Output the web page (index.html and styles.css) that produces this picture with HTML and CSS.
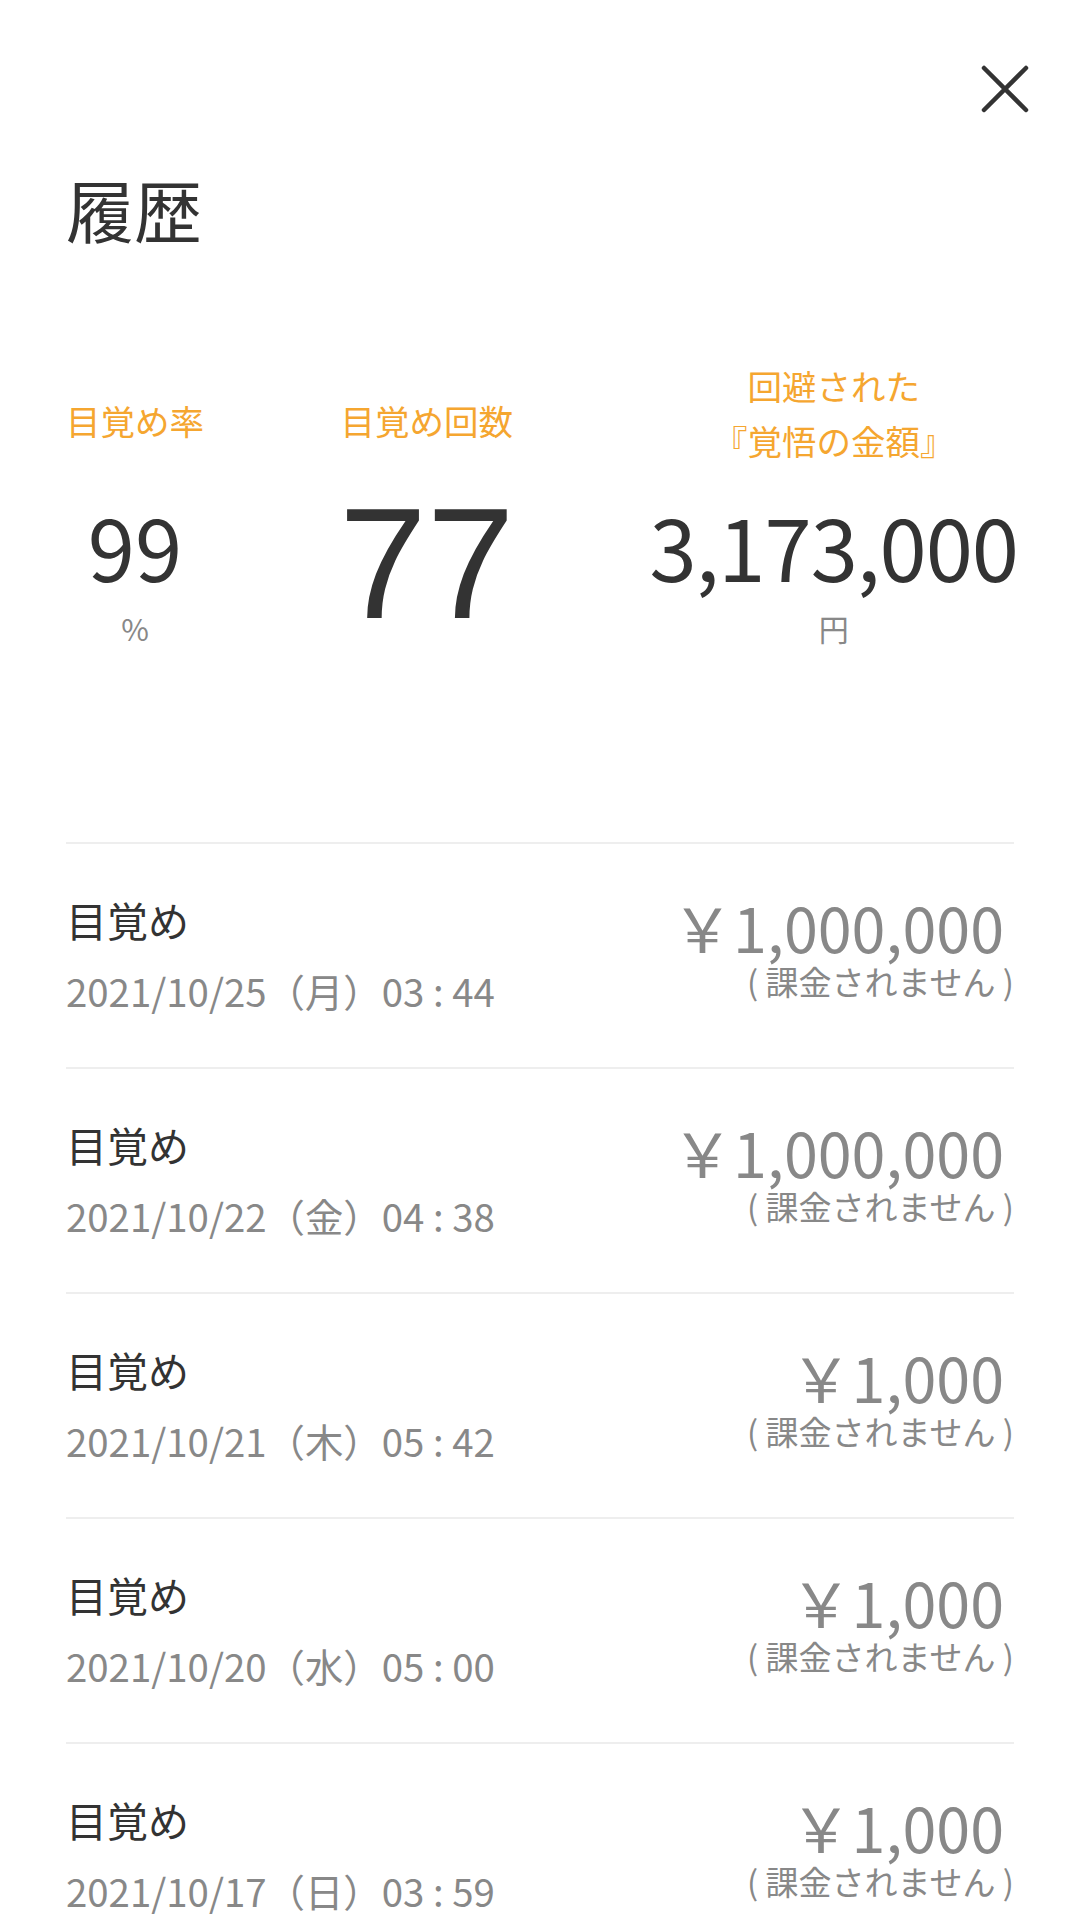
FILE: index.html
```html
<!DOCTYPE html>
<html lang="ja">
<head>
<meta charset="utf-8">
<title>履歴</title>
<link rel="stylesheet" href="styles.css">
</head>
<body>
<div class="page">
  <div class="topbar">
    <button class="close" aria-label="閉じる">
      <svg width="48" height="48" viewBox="0 0 48 48"><path d="M3 3 L45 45 M45 3 L3 45" stroke="#333" stroke-width="4.5" stroke-linecap="round" fill="none"/></svg>
    </button>
  </div>
  <div class="content">
    <h1 class="title">履歴</h1>
    <div class="stats">
      <div class="stat">
        <div class="stat-label single">目覚め率</div>
        <div class="stat-value">99</div>
        <div class="stat-unit">%</div>
      </div>
      <div class="stat">
        <div class="stat-label single">目覚め回数</div>
        <div class="stat-value big">77</div>
      </div>
      <div class="stat">
        <div class="stat-label">回避された<br>『覚悟の金額』</div>
        <div class="stat-value tight">3,173,000</div>
        <div class="stat-unit">円</div>
      </div>
    </div>
    <ul class="list">
      <li class="row">
        <div class="row-left"><div class="row-title">目覚め</div><div class="row-date">2021/10/25（月）03 : 44</div></div>
        <div class="row-right"><div class="amount">￥1,000,000</div><div class="note">( 課金されません )</div></div>
      </li>
      <li class="row">
        <div class="row-left"><div class="row-title">目覚め</div><div class="row-date">2021/10/22（金）04 : 38</div></div>
        <div class="row-right"><div class="amount">￥1,000,000</div><div class="note">( 課金されません )</div></div>
      </li>
      <li class="row">
        <div class="row-left"><div class="row-title">目覚め</div><div class="row-date">2021/10/21（木）05 : 42</div></div>
        <div class="row-right"><div class="amount">￥1,000</div><div class="note">( 課金されません )</div></div>
      </li>
      <li class="row">
        <div class="row-left"><div class="row-title">目覚め</div><div class="row-date">2021/10/20（水）05 : 00</div></div>
        <div class="row-right"><div class="amount">￥1,000</div><div class="note">( 課金されません )</div></div>
      </li>
      <li class="row">
        <div class="row-left"><div class="row-title">目覚め</div><div class="row-date">2021/10/17（日）03 : 59</div></div>
        <div class="row-right"><div class="amount">￥1,000</div><div class="note">( 課金されません )</div></div>
      </li>
    </ul>
  </div>
</div>
</body>
</html>
```
FILE: styles.css
```css
* { box-sizing: border-box; }
html, body {
  margin: 0;
  padding: 0;
  background: #ffffff;
}
body {
  font-family: "Noto Sans CJK JP", "Noto Sans", sans-serif;
  color: #333333;
}
.page {
  width: 1080px;
  height: 1932px;
  overflow: hidden;
}
.topbar {
  display: flex;
  justify-content: flex-end;
  padding: 65px 51px 0 0;
}
.close {
  width: 48px;
  height: 48px;
  padding: 0;
  border: 0;
  background: none;
  display: block;
}
.close svg { display: block; }
.content {
  padding: 0 66px;
}
.title {
  margin: 57px 0 0;
  font-size: 68px;
  line-height: 78px;
  font-weight: 400;
  color: #333333;
}
.stats {
  display: flex;
  justify-content: space-between;
  align-items: flex-start;
  margin: 110px -4px 0 0;
}
.stat {
  display: flex;
  flex-direction: column;
  align-items: center;
  text-align: center;
}
.stat-label {
  height: 110px;
  display: flex;
  align-items: center;
  justify-content: center;
  font-size: 34.5px;
  line-height: 55px;
  color: #f5a630;
  white-space: nowrap;
}
.stat-label.single {
  padding-top: 14px;
}
.stat-value {
  margin-top: 17px;
  font-size: 85px;
  line-height: 120px;
  color: #333333;
  white-space: nowrap;
}
.stat-value.tight {
  letter-spacing: -1px;
}
.stat-value.big {
  font-family: "Liberation Sans", Arial, sans-serif;
  font-size: 158px;
  line-height: 157px;
}
.stat-unit {
  margin-top: 3px;
  font-size: 30px;
  line-height: 40px;
  color: #888888;
}
.list {
  list-style: none;
  margin: 194px 0 0;
  padding: 0;
}
.row {
  display: flex;
  justify-content: space-between;
  align-items: flex-start;
  border-top: 2px solid #eeeeee;
  padding: 47px 0 52px;
}
.row-left {
  display: flex;
  flex-direction: column;
}
.row-title {
  font-size: 41px;
  line-height: 56px;
  color: #333333;
}
.row-date {
  margin-top: 18px;
  font-size: 38.4px;
  line-height: 50px;
  color: #888888;
}
.row-right {
  display: flex;
  flex-direction: column;
  align-items: flex-end;
  margin-top: 4px;
}
.amount {
  font-size: 61px;
  line-height: 64px;
  color: #888888;
  padding-right: 10px;
}
.note {
  font-size: 33px;
  line-height: 44px;
  color: #888888;
}
```
